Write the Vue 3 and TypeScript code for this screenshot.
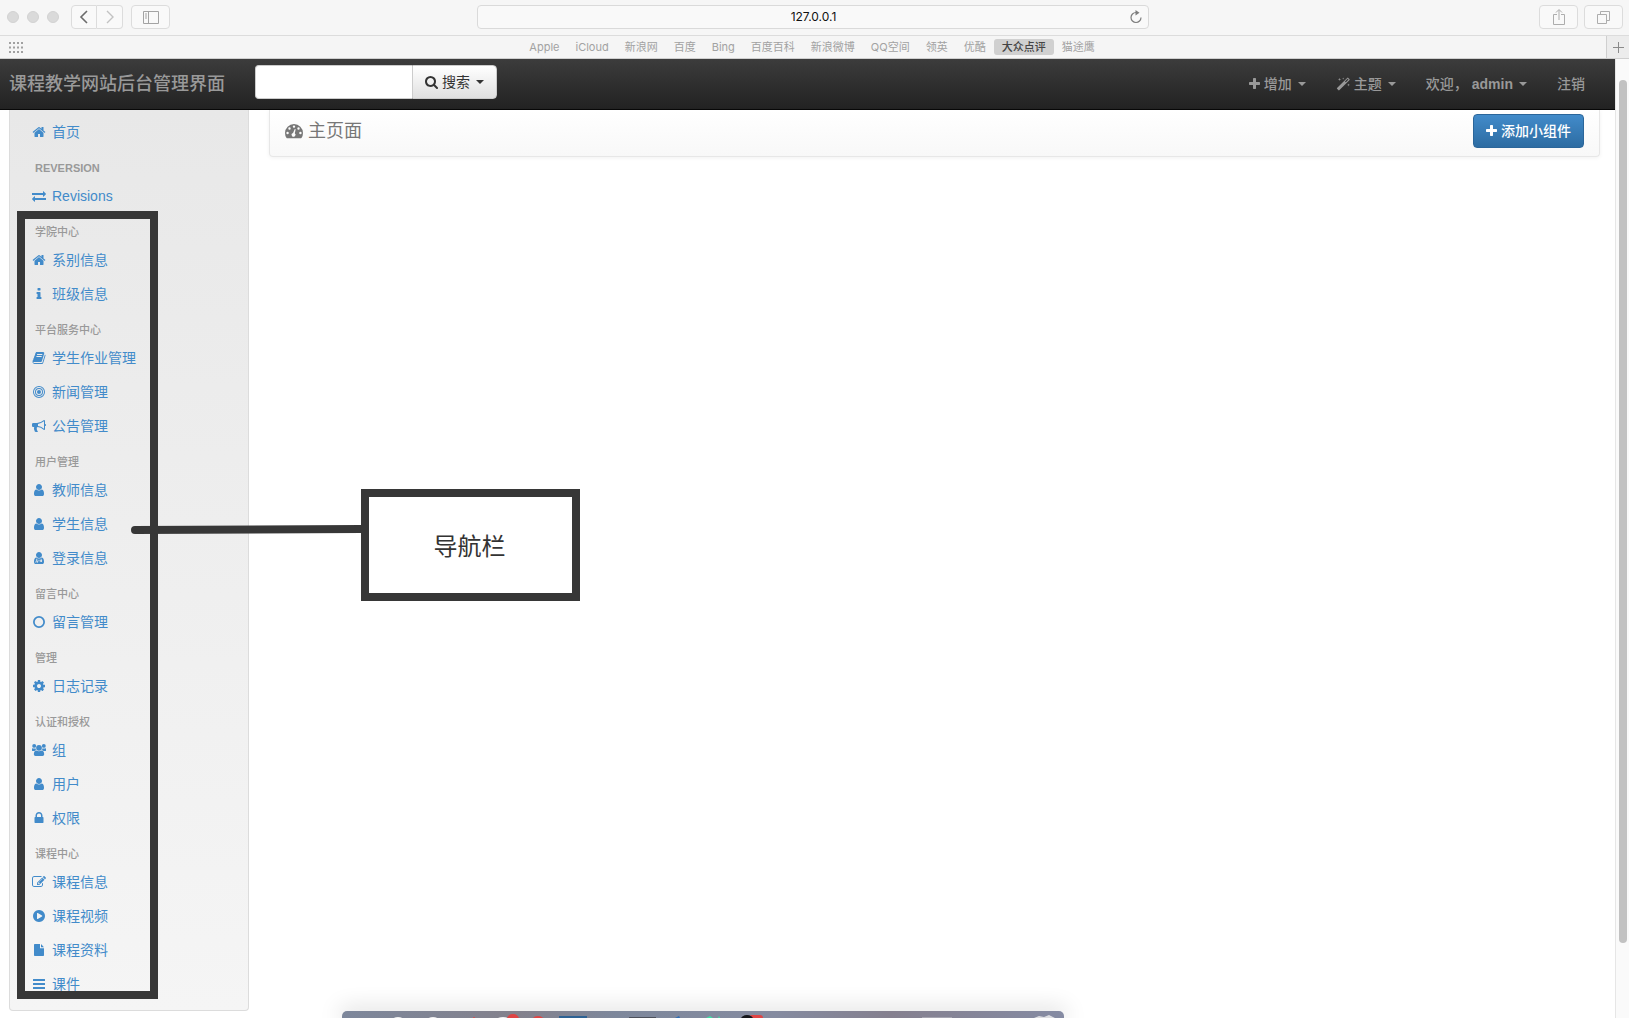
<script setup lang="ts">
import { ref } from 'vue'

interface NavItem { label: string; icon: string }
interface NavGroup { title: string; items: NavItem[] }

const circle = (x: number, y: number, r: number) =>
  `M${x - r} ${y}a${r} ${r} 0 1 0 ${r * 2} 0a${r} ${r} 0 1 0 ${-r * 2} 0z`

const user = 'M1536 1399q0 109-62.5 187t-150.5 78h-854q-88 0-150.5-78t-62.5-187q0-85 8.5-160.5t31.5-152 58.5-131 94-89 134.5-34.5q131 128 313 128t313-128q76 0 134.5 34.5t94 89 58.5 131 31.5 152 8.5 160.5zm-256-887q0 159-112.5 271.5t-271.5 112.5-271.5-112.5-112.5-271.5 112.5-271.5 271.5-112.5 271.5 112.5 112.5 271.5z'

const icons: Record<string, string> = {
  user,
  doctor: user + 'M560 980h110v250l100 110v150h-90v-110l-66-70-66 70v110h-90v-150l102-110zM1120 980h100v170a130 130 0 1 1-100 0zM790 1100l106 110 106-110-106 300z',
  home: 'M1472 992v480q0 26-19 45t-45 19h-384v-384h-256v384h-384q-26 0-45-19t-19-45v-480q0-1 .5-3t.5-3l575-474 575 474q1 2 1 6zm223-69l-62 74q-8 9-21 11h-3q-13 0-21-7l-692-577-692 577q-12 8-24 7-13-2-21-11l-62-74q-8-10-7-23.5t11-21.5l719-599q32-26 76-26t76 26l244 204v-195q0-14 9-23t23-9h192q14 0 23 9t9 23v408l219 182q10 8 11 21.5t-7 23.5z',
  exchange: 'M1792 1184v192q0 13-9.5 22.5t-22.5 9.5h-1376v192q0 13-9.5 22.5t-22.5 9.5q-12 0-24-10l-319-320q-9-9-9-22 0-14 9-23l320-320q9-9 23-9 13 0 22.5 9.5t9.5 22.5v192h1376q13 0 22.5 9.5t9.5 22.5zm0-544q0 14-9 23l-320 320q-9 9-23 9-13 0-22.5-9.5t-9.5-22.5v-192h-1376q-13 0-22.5-9.5t-9.5-22.5v-192q0-13 9.5-22.5t22.5-9.5h1376v-192q0-14 9-23t23-9q12 0 24 10l319 319q9 9 9 23z',
  info: 'M1216 1344v128q0 26-19 45t-45 19h-512q-26 0-45-19t-19-45v-128q0-26 19-45t45-19h64v-384h-64q-26 0-45-19t-19-45v-128q0-26 19-45t45-19h384q26 0 45 19t19 45v576h64q26 0 45 19t19 45zm-128-1152v192q0 26-19 45t-45 19h-256q-26 0-45-19t-19-45v-192q0-26 19-45t45-19h256q26 0 45 19t19 45z',
  book: 'M1703 478q40 57 18 129l-275 906q-19 64-76.5 107.5t-122.5 43.5h-923q-77 0-148.5-53.5t-99.5-131.5q-24-67-2-127 0-4 3-27t4-37q1-8-3-21.5t-3-19.5q2-11 8-21t16.5-23.5 16.5-23.5q23-38 45-91.5t30-91.5q3-10 .5-30t-.5-28q3-11 17-28t17-23q21-36 42-92t25-90q1-9-2.5-32t.5-28q4-13 22-30.5t22-22.5q19-26 42.5-84.5t27.5-96.5q1-8-3-25.5t-2-26.5q2-8 9-18t18-23 17-21q8-12 16.5-30.5t15-35 16-36 19.5-32 26.5-23.5 36-11.5 47.5 5.5l-1 3q38-9 51-9h761q74 0 114 56t18 130l-274 906q-36 119-71.5 153.5t-128.5 34.5h-869q-27 0-38 15-11 16-1 43 24 70 144 70h923q29 0 56-15.5t35-41.5l300-987q7-22 5-57 38 15 59 43zm-1064 2q-4 13 2 22.5t20 9.5h608q13 0 25.5-9.5t16.5-22.5l21-64q4-13-2-22.5t-20-9.5h-608q-13 0-25.5 9.5t-16.5 22.5zm-83 256q-4 13 2 22.5t20 9.5h608q13 0 25.5-9.5t16.5-22.5l21-64q4-13-2-22.5t-20-9.5h-608q-13 0-25.5 9.5t-16.5 22.5z',
  target: [768, 640, 512, 384, 256].map(r => circle(896, 896, r)).join(''),
  bullhorn: 'M1664 640q53 0 90.5 37.5t37.5 90.5-37.5 90.5-90.5 37.5v384q0 52-38 90t-90 38q-417-347-812-380-58 19-91 66t-31 100.5 40 92.5q-20 33-23 65.5t6 58 33.5 55 48 50 61.5 50.5q-29 58-111.5 83t-168.5 11.5-132-55.5q-7-23-29.5-87.5t-32-94.5-23-89-15-101 3.5-98.5 22-110.5h-122q-66 0-113-47t-47-113v-192q0-66 47-113t113-47h480q435 0 896-384 52 0 90 38t38 90v384zm-128 604v-954q-394 302-768 343v270q377 42 768 341z',
  ring: circle(896, 896, 768) + circle(896, 896, 544),
  cog: 'M1152 896q0-106-75-181t-181-75-181 75-75 181 75 181 181 75 181-75 75-181zm512-109v222q0 12-8 23t-20 13l-185 28q-19 54-39 91 35 50 107 138 10 12 10 25t-9 23q-27 37-99 108t-94 71q-12 0-26-9l-138-108q-44 23-91 38-16 136-29 186-7 28-36 28h-222q-14 0-24.5-8.5t-11.5-21.5l-28-184q-49-16-90-37l-141 107q-10 9-25 9-14 0-25-11-126-114-165-168-7-10-7-23 0-12 8-23 15-21 51-66.5t54-70.5q-27-50-41-99l-183-27q-13-2-21-12.5t-8-23.5v-222q0-12 8-23t19-13l186-28q14-46 39-92-40-57-107-138-10-12-10-24 0-10 9-23 26-36 98.5-107.5t94.5-71.5q13 0 26 10l138 107q44-23 91-38 16-136 29-186 7-28 36-28h222q14 0 24.5 8.5t11.5 21.5l28 184q49 16 90 37l142-107q9-9 24-9 13 0 25 10 129 119 165 170 7 8 7 22 0 12-8 23-15 21-51 66.5t-54 70.5q26 50 41 98l183 28q13 2 21 12.5t8 23.5z',
  group: circle(896, 620, 370) + circle(280, 370, 250) + circle(1512, 370, 250) +
    'M540 960q350 190 712 0q270 0 310 480q0 224-210 224h-912q-210 0-210-224q40-480 310-480zM50 660q180 90 390 0q20 200 120 250q-160 0-230 114h-230q-150 0-150-170q0-160 100-194zM1742 660q-180 90-390 0q-20 200-120 250q160 0 230 114h230q150 0 150-170q0-160-100-194z',
  lock: 'M640 768h512v-192q0-106-75-181t-181-75-181 75-75 181v192zm832 96v576q0 40-28 68t-68 28h-960q-40 0-68-28t-28-68v-576q0-40 28-68t68-28h32v-192q0-184 132-316t316-132 316 132 132 316v192h32q40 0 68 28t28 68z',
  edit: 'M888 1184l116-116-152-152-116 116v56h96v96h56zm440-720q-16-16-33 1l-350 350q-17 17-1 33t33-1l350-350q17-17 1-33zm80 594v190q0 119-84.5 203.5t-203.5 84.5h-832q-119 0-203.5-84.5t-84.5-203.5v-832q0-119 84.5-203.5t203.5-84.5h832q63 0 117 25 15 7 18 23 3 17-9 29l-49 49q-14 14-32 8-23-6-45-6h-832q-66 0-113 47t-47 113v832q0 66 47 113t113 47h832q66 0 113-47t47-113v-126q0-13 9-22l64-64q15-15 35-7t20 29zm-96-738l288 288-672 672h-288v-288zm444 132l-92 92-288-288 92-92q28-28 68-28t68 28l152 152q28 28 28 68t-28 68z',
  play: 'M896 128q209 0 385.5 103t279.5 279.5 103 385.5-103 385.5-279.5 279.5-385.5 103-385.5-103-279.5-279.5-103-385.5 103-385.5 279.5-279.5 385.5-103zm384 823q32-18 32-55t-32-55l-544-320q-31-19-64-1-32 19-32 56v640q0 37 32 56 16 8 32 8 17 0 32-9z',
  file: 'M1024 128v480q0 64 64 64h448v896q0 96-96 96h-1088q-96 0-96-96v-1344q0-96 96-96zM1152 128l384 416h-384z',
  bars: 'M128 300q0-44 44-44h1448q44 0 44 44v168q0 44-44 44h-1448q-44 0-44-44zM128 812q0-44 44-44h1448q44 0 44 44v168q0 44-44 44h-1448q-44 0-44-44zM128 1324q0-44 44-44h1448q44 0 44 44v168q0 44-44 44h-1448q-44 0-44-44z',
  search: 'M1216 832q0-185-131.5-316.5t-316.5-131.5-316.5 131.5-131.5 316.5 131.5 316.5 316.5 131.5 316.5-131.5 131.5-316.5zm512 832q0 52-38 90t-90 38q-54 0-90-38l-343-342q-179 124-399 124-143 0-273.5-55.5t-225-150-150-225-55.5-273.5 55.5-273.5 150-225 225-150 273.5-55.5 273.5 55.5 225 150 150 225 55.5 273.5q0 220-124 399l343 343q37 37 37 90z',
  plus: 'M1600 736v192q0 40-28 68t-68 28h-416v416q0 40-28 68t-68 28h-192q-40 0-68-28t-28-68v-416h-416q-40 0-68-28t-28-68v-192q0-40 28-68t68-28h416v-416q0-40 28-68t68-28h192q40 0 68 28t28 68v416h416q40 0 68 28t28 68z',
  magic: 'M1540 90l200 200q30 40 0 80l-1330 1330q-40 34-80 0l-200-200q-34-40 0-80l1330-1330q40-34 80 0zM1490 220l-340 340 110 110 340-340zM450 80l50 170 170 50-170 50-50 170-50-170-170-50 170-50zM920 60l34 106 106 34-106 34-34 106-34-106-106-34 106-34zM1600 820l44 146 146 44-146 44-44 146-44-146-146-44 146-44z',
  gauge: 'M896 200a896 896 0 0 1 896 896q0 260-139 482q-18 30-54 30h-1406q-36 0-54-30q-139-222-139-482a896 896 0 0 1 896-896z' +
    circle(256, 1100, 120) + circle(448, 650, 120) + circle(896, 460, 120) + circle(1344, 650, 120) + circle(1536, 1100, 120) +
    'M975 700l88 30-90 390a190 190 0 1 1-170-34z',
}

const bookmarks = ['Apple', 'iCloud', '新浪网', '百度', 'Bing', '百度百科', '新浪微博', 'QQ空间', '领英', '优酷', '大众点评', '猫途鹰']
const activeBookmark = '大众点评'

const groups: NavGroup[] = [
  { title: '', items: [{ label: '首页', icon: 'home' }] },
  { title: 'REVERSION', items: [{ label: 'Revisions', icon: 'exchange' }] },
  { title: '学院中心', items: [{ label: '系别信息', icon: 'home' }, { label: '班级信息', icon: 'info' }] },
  { title: '平台服务中心', items: [{ label: '学生作业管理', icon: 'book' }, { label: '新闻管理', icon: 'target' }, { label: '公告管理', icon: 'bullhorn' }] },
  { title: '用户管理', items: [{ label: '教师信息', icon: 'user' }, { label: '学生信息', icon: 'user' }, { label: '登录信息', icon: 'doctor' }] },
  { title: '留言中心', items: [{ label: '留言管理', icon: 'ring' }] },
  { title: '管理', items: [{ label: '日志记录', icon: 'cog' }] },
  { title: '认证和授权', items: [{ label: '组', icon: 'group' }, { label: '用户', icon: 'user' }, { label: '权限', icon: 'lock' }] },
  { title: '课程中心', items: [{ label: '课程信息', icon: 'edit' }, { label: '课程视频', icon: 'play' }, { label: '课程资料', icon: 'file' }, { label: '课件', icon: 'bars' }] },
]

const address = ref('127.0.0.1')
const query = ref('')
</script>

<template>
  <div class="window">
    <header class="toolbar">
      <div class="tools">
        <span class="light"></span><span class="light"></span><span class="light"></span>
        <div class="history">
          <button type="button" class="tool" aria-label="后退">
            <svg width="10" height="14" viewBox="0 0 10 14"><path d="M8 1L2 7l6 6" fill="none" stroke="#6b6b6b" stroke-width="1.6" /></svg>
          </button>
          <button type="button" class="tool" aria-label="前进">
            <svg width="10" height="14" viewBox="0 0 10 14"><path d="M2 1l6 6-6 6" fill="none" stroke="#c2c2c2" stroke-width="1.4" /></svg>
          </button>
        </div>
        <button type="button" class="tool wide" aria-label="边栏">
          <svg width="16" height="13" viewBox="0 0 16 13" fill="none" stroke="#a3a3a3"><path d="M.5.5h15v12H.5zM5.500.5v12M2 3h2M2 5h2M2 7h2" /></svg>
        </button>
      </div>
      <div class="address">
        <input v-model="address" type="text" aria-label="地址">
        <button type="button" class="reload" aria-label="重新载入">
          <svg width="12" height="14" viewBox="0 0 12 14"><path d="M6 2.500a5 5 0 1 0 5 5" fill="none" stroke="#7d7d7d" stroke-width="1.200" /><path d="M5.500 0l4 2.700-4 2.700z" fill="#7d7d7d" /></svg>
        </button>
      </div>
      <div class="tools end">
        <button type="button" class="tool wide" aria-label="共享">
          <svg width="12" height="16" viewBox="0 0 12 16" fill="none" stroke="#adadad"><path d="M4 5.500H.5v10h11v-10H8M6 11V1M3 3.500l3-3 3 3" /></svg>
        </button>
        <button type="button" class="tool wide" aria-label="标签页">
          <svg width="13" height="13" viewBox="0 0 13 13" fill="none" stroke="#adadad"><path d="M.5 3.500h9v9h-9zM3.500 3V.5h9v9H10" /></svg>
        </button>
      </div>
    </header>

    <nav class="favorites" aria-label="书签">
      <button type="button" class="grid" aria-label="个人收藏">
        <svg width="15" height="11" viewBox="0 0 15 11"><path d="M0 1h15M0 5.500h15M0 10h15" stroke="#a0a0a0" stroke-width="2" stroke-dasharray="2 2" /></svg>
      </button>
      <div class="links">
        <a v-for="b in bookmarks" :key="b" href="#" :class="{ active: b === activeBookmark }">{{ b }}</a>
      </div>
      <button type="button" class="new-tab" aria-label="新标签页">
        <svg width="11" height="11" viewBox="0 0 11 11"><path d="M5.500 0v11M0 5.500h11" stroke="#8a8a8a" /></svg>
      </button>
    </nav>

    <div class="viewport">
      <div class="page">
        <nav class="navbar">
          <a href="#" class="brand">课程教学网站后台管理界面</a>
          <form class="search" @submit.prevent>
            <input v-model="query" type="text" aria-label="搜索内容">
            <button type="submit">
              <svg class="icon lens" viewBox="64 0 1664 1792"><path :d="icons.search" /></svg>
              <span>搜索</span><i class="caret"></i>
            </button>
          </form>
          <div class="menu">
            <a href="#"><svg class="icon plus" viewBox="192 0 1408 1792"><path :d="icons.plus" /></svg><span>增加</span><i class="caret"></i></a>
            <a href="#"><svg class="icon" viewBox="0 0 1792 1792"><path :d="icons.magic" /></svg><span>主题</span><i class="caret"></i></a>
            <a href="#"><span>欢迎，</span><strong>admin</strong><i class="caret"></i></a>
            <a href="#"><span>注销</span></a>
          </div>
        </nav>

        <div class="columns">
          <aside class="sidebar">
            <section v-for="(g, i) in groups" :key="i">
              <h2 v-if="g.title">{{ g.title }}</h2>
              <a v-for="item in g.items" :key="item.label" href="#">
                <span class="slot"><svg class="icon" viewBox="0 0 1792 1792"><path :d="icons[item.icon]" /></svg></span>
                <span>{{ item.label }}</span>
              </a>
            </section>
          </aside>
          <main>
            <div class="heading">
              <h1><svg class="icon" viewBox="0 0 1792 1792"><path :d="icons.gauge" /></svg><span>主页面</span></h1>
              <button type="button">
                <svg class="icon plus" viewBox="192 0 1408 1792"><path :d="icons.plus" /></svg><span>添加小组件</span>
              </button>
            </div>
          </main>
        </div>
      </div>
      <div class="scrollbar"><div class="thumb"></div></div>
    </div>

    <div class="frame"></div>
    <svg class="connector" width="236" height="10" viewBox="0 0 236 10"><path d="M5 6L232 5" stroke="#373737" stroke-width="8" stroke-linecap="round" /></svg>
    <div class="callout">导航栏</div>

    <div class="dock">
      <svg width="722" height="7" viewBox="0 0 722 7">
        <g fill="#f2f2f2"><ellipse cx="56" cy="9" rx="6" ry="3" /><ellipse cx="91" cy="9" rx="6" ry="3" /><ellipse cx="161" cy="9" rx="7" ry="3" /><path d="M692 7l5-2 5 1 5-2 6 3z" opacity=".8" /><path d="M580 6h30v1h-30z" opacity=".3" /></g>
        <g fill="#df4545"><ellipse cx="171" cy="8" rx="6" ry="5" /><ellipse cx="196" cy="9" rx="6" ry="4" /><rect x="407" y="4" width="14" height="6" rx="3" /><circle cx="132" cy="7" r="1" /></g>
        <path d="M217 5h28v2h-28z" fill="#2d6294" /><path d="M287 6h27v1h-27z" fill="#4c505b" />
        <ellipse cx="405" cy="8" rx="6" ry="4" fill="#15161b" />
        <path d="M364 7l4-2 3 2zM376 7l1-2 1 2z" fill="#3fe0a3" /><path d="M333 7l4-2 1 2z" fill="#2d6db5" />
      </svg>
    </div>
  </div>
</template>

<style>
body { background: #fff; }
</style>

<style scoped>
* { box-sizing: border-box; }
.window {
  position: relative;
  display: flex;
  flex-direction: column;
  min-height: 100vh;
  overflow: hidden;
  font: 14px/20px "Liberation Sans", "Noto Sans CJK SC", sans-serif;
  color: #333;
}
button, input { font: inherit; color: inherit; margin: 0; }
a { text-decoration: none; }
svg { display: block; flex: none; }
.icon { width: 14px; height: 14px; fill: currentColor; fill-rule: evenodd; }
.icon.plus { width: 11px; }
.icon.lens { width: 13px; }
.caret { border: 4px solid transparent; border-top-color: currentColor; border-bottom: 0; margin-left: 2px; }

.toolbar {
  display: grid;
  grid-template-columns: 1fr minmax(0, 672px) 1fr;
  align-items: center;
  height: 36px;
  padding: 0 6px 1px 2px;
  background: #f6f6f6;
  border-bottom: 1px solid #dcdcdc;
}
.tools { display: flex; align-items: center; gap: 8px; padding-left: 5px; }
.tools.end { justify-content: flex-end; gap: 6px; }
.light { width: 12px; height: 12px; border-radius: 50%; background: #dadada; border: 1px solid #d2d2d2; }
.history { display: flex; margin-left: 4px; }
.tool {
  display: flex;
  align-items: center;
  justify-content: center;
  width: 26px;
  height: 24px;
  padding: 0;
  background: #f9f9f9;
  border: 1px solid #dcdcdc;
  border-radius: 4px;
}
.history .tool:first-child { border-radius: 4px 0 0 4px; }
.history .tool:last-child { border-radius: 0 4px 4px 0; border-left: 0; }
.tool.wide { width: 39px; }
.address {
  display: flex;
  align-items: center;
  height: 24px;
  padding: 0 6px 0 20px;
  background: #f9f9f9;
  border: 1px solid #dadada;
  border-radius: 4px;
}
.address input {
  flex: 1;
  min-width: 0;
  padding: 0;
  border: 0;
  outline: 0;
  background: none;
  font: 12px/20px Inter, sans-serif;
  color: #111;
  text-align: center;
}
.reload, .grid, .new-tab { display: flex; align-items: center; justify-content: center; padding: 0; border: 0; background: none; }

.favorites {
  display: flex;
  align-items: center;
  height: 23px;
  padding-left: 9px;
  background: #f5f5f5;
  border-bottom: 1px solid #cfcfcf;
}
.links {
  flex: 1;
  display: flex;
  align-items: center;
  justify-content: center;
  gap: 16px;
  padding-right: 6px;
  font: 11px/16px Inter, "Noto Sans CJK SC", sans-serif;
}
.links a { color: #a2a2a2; }
.links .active { margin: 0 -8px; padding: 0 8px; border-radius: 3px; background: #d0d0d0; color: #444; font-weight: 500; }
.new-tab { width: 23px; height: 22px; background: #ececec; border-left: 1px solid #cfcfcf; }

.viewport { flex: 1; display: flex; }
.page { flex: 1; min-width: 0; }
.scrollbar { width: 14px; padding: 21px 2px 0 3px; background: #fafafa; border-left: 1px solid #e6e6e6; }
.thumb { height: 863px; border-radius: 4px; background: #c2c2c2; }

.navbar {
  display: flex;
  align-items: flex-start;
  height: 51px;
  padding: 0 15px 0 9px;
  background: linear-gradient(#3c3c3c, #222);
  border-bottom: 1px solid #080808;
  color: #999;
}
.brand { width: 246px; padding: 15px 0; font-size: 18px; font-weight: 500; color: #999; white-space: nowrap; }
.search { display: flex; margin-top: 6px; }
.search input {
  width: 157px;
  height: 34px;
  padding: 6px 12px;
  border: 1px solid #ccc;
  border-right: 0;
  border-radius: 4px 0 0 4px;
  outline: 0;
  background: #fff;
}
.search button {
  display: flex;
  align-items: center;
  gap: 4px;
  height: 34px;
  padding: 0 12px;
  border: 1px solid #ccc;
  border-radius: 0 4px 4px 0;
  background: linear-gradient(#fff, #e0e0e0);
  color: #333;
}
.menu { display: flex; margin-left: auto; font-weight: 500; }
.menu a { display: flex; align-items: center; gap: 4px; padding: 15px; color: #999; white-space: nowrap; }

.columns { display: flex; align-items: flex-start; gap: 20px; padding: 0 15px 0 9px; }
.sidebar {
  width: 240px;
  padding: 5px 0 9px;
  border: 1px solid #dcdcdc;
  border-top: 0;
  border-radius: 0 0 4px 4px;
  background: linear-gradient(#e8e8e8, #f5f5f5);
}
.sidebar h2 {
  margin: 0;
  padding: 8px 0 0 25px;
  font-size: 11px;
  line-height: 22px;
  font-weight: 600;
  color: #999;
}
.sidebar section:nth-child(n + 3) h2 { font-weight: 500; }
.sidebar a { display: flex; align-items: center; gap: 4px; height: 34px; padding-left: 20px; color: #428bca; }
.slot { display: flex; justify-content: center; width: 18px; }

main { flex: 1; min-width: 0; }
.heading {
  display: flex;
  align-items: flex-start;
  justify-content: space-between;
  height: 47px;
  padding: 4px 15px 0;
  border: 1px solid #e7e7e7;
  border-top: 0;
  border-radius: 0 0 4px 4px;
  background: linear-gradient(#fff, #f8f8f8);
  box-shadow: 0 1px 4px rgba(0, 0, 0, .06);
}
.heading h1 { display: flex; align-items: center; gap: 5px; margin: 0; font-size: 18px; line-height: 34px; font-weight: 400; color: #777; }
.heading h1 .icon { width: 18px; height: 18px; }
.heading button {
  display: flex;
  align-items: center;
  gap: 4px;
  height: 34px;
  padding: 0 12px;
  border: 1px solid #2b669a;
  border-radius: 4px;
  background: linear-gradient(#428bca, #2d6ca2);
  color: #fff;
  font-weight: 500;
}

.frame { position: absolute; left: 17px; top: 211px; width: 141px; height: 788px; border: 8px solid #373737; pointer-events: none; }
.connector { position: absolute; left: 130px; top: 524px; }
.callout {
  position: absolute;
  left: 361px;
  top: 489px;
  width: 219px;
  height: 112px;
  padding-right: 2px;
  border: 8px solid #373737;
  background: #fff;
  font-size: 24px;
  line-height: 100px;
  text-align: center;
}
.dock {
  position: absolute;
  left: 342px;
  bottom: 0;
  width: 722px;
  height: 7px;
  border-radius: 5px 5px 0 0;
  background: linear-gradient(90deg, #7d879b, #83818c 24%, #7d879b 38%, #858ba0 60%, #85808f 76%, #858ba3);
  box-shadow: 0 0 22px 3px rgba(0, 0, 0, .15);
}
</style>
